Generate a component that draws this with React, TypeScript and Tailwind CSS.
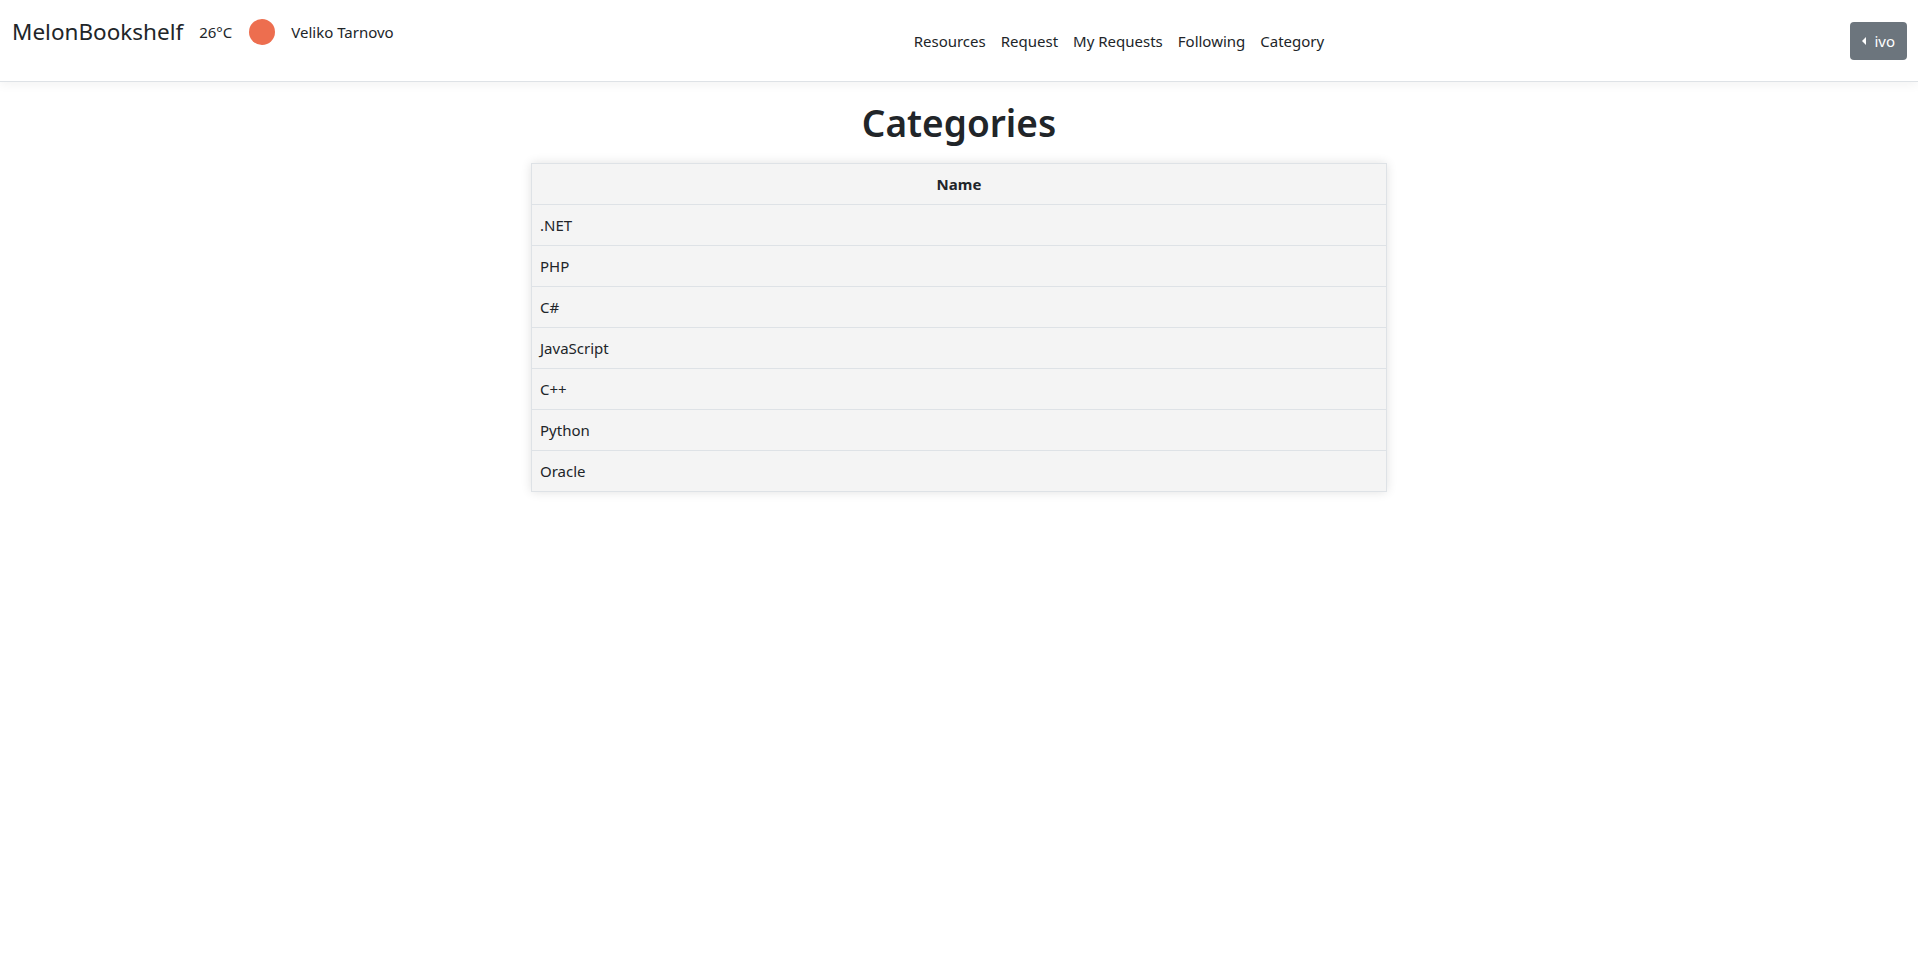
import React from 'react';

const categories = ['.NET', 'PHP', 'C#', 'JavaScript', 'C++', 'Python', 'Oracle'];
const links = ['Resources', 'Request', 'My Requests', 'Following', 'Category'];

const App: React.FC = () => {
  return (
    <div className="min-h-screen bg-white text-[#212529] font-['Noto_Sans','Open_Sans',sans-serif]">
      <nav className="h-[82px] border-b border-[#dee2e6] shadow-[0_3px_10px_rgba(0,0,0,0.05)] flex items-start">
        <div className="flex items-center h-[64px] pl-[12px]">
          <span className="text-[22.5px] leading-none text-[#212529]">MelonBookshelf</span>
          <span className="ml-[16px] text-[15px]">26°C</span>
          <span className="ml-[17px] w-[26px] h-[26px] rounded-full bg-[#ed6e4f]" />
          <span className="ml-[16px] text-[15px]">Veliko Tarnovo</span>
        </div>
        <ul className="flex items-center gap-[15px] ml-[520px] mt-[29px] text-[15px] leading-[24px]">
          {links.map((l) => (
            <li key={l}>
              <a href="#" className="text-[#212529]">{l}</a>
            </li>
          ))}
        </ul>
        <div className="ml-auto mr-[11px] mt-[22px]">
          <button className="h-[38px] px-[12px] rounded-[4px] bg-[#6c757d] text-white text-[15px] flex items-center gap-[8px]">
            <span className="w-0 h-0 border-y-[4px] border-y-transparent border-r-[4px] border-r-white" />
            ivo
          </button>
        </div>
      </nav>

      <main className="flex flex-col items-center">
        <h1 className="mt-[17px] mb-[16px] text-[37px] leading-[48px] font-semibold">Categories</h1>
        <table className="w-[856px] border-collapse bg-[#f4f4f4] shadow-[0_0_10px_rgba(0,0,0,0.12)] text-[15px]">
          <thead>
            <tr className="border border-[#dee2e6]">
              <th className="py-[8px] px-[8px] leading-[24px] font-bold text-center">Name</th>
            </tr>
          </thead>
          <tbody>
            {categories.map((c) => (
              <tr key={c} className="border border-[#dee2e6]">
                <td className="py-[8px] px-[8px] leading-[24px]">{c}</td>
              </tr>
            ))}
          </tbody>
        </table>
      </main>
    </div>
  );
};

export default App;
